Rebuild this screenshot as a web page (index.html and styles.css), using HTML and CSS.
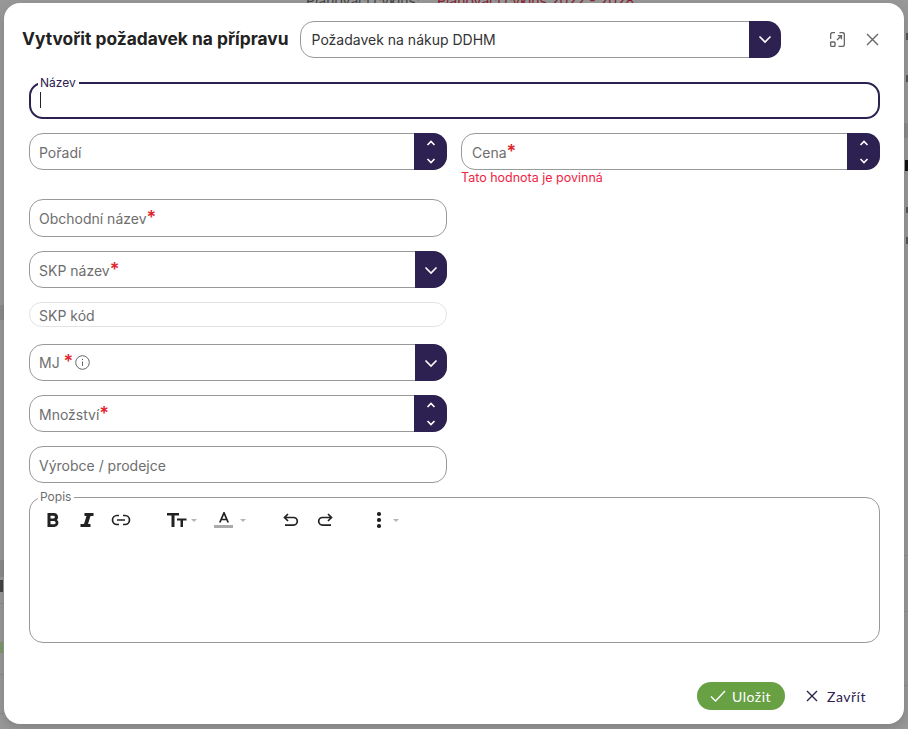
FILE: index.html
```html
<!DOCTYPE html>
<html lang="cs">
<head>
  <meta charset="UTF-8" />
  <meta name="viewport" content="width=device-width, initial-scale=1" />
  <title>Vytvořit požadavek na přípravu</title>
  <link rel="stylesheet" href="styles.css">
</head>
<body>
  <!-- Page behind the modal -->
  <div class="backdrop-text">
    <span>Plánovací cyklus:</span>
    <span class="backdrop-red">Plánovací cyklus 2022 - 2028</span>
  </div>
  <div class="mark left band-a"></div>
  <div class="mark left band-b"></div>
  <div class="mark left text-a"></div>
  <div class="mark left line-a"></div>
  <div class="mark left green-a"></div>
  <div class="mark left line-b"></div>
  <div class="mark left line-c"></div>
  <div class="mark right text-b"></div>
  <div class="mark right text-c"></div>
  <div class="mark right band-c"></div>
  <div class="mark right text-d"></div>
  <div class="mark right text-e"></div>
  <div class="mark right text-f"></div>
  <div class="mark right line-d"></div>
  <div class="mark right line-e"></div>
  <div class="mark right line-f"></div>

  <div id="modal" role="dialog" aria-labelledby="modal-title">
    <header class="modal-header">
      <h2 id="modal-title">Vytvořit požadavek na přípravu</h2>
      <div class="field type-select">
        <span class="field-value">Požadavek na nákup DDHM</span>
        <button class="addon addon-select" aria-label="Vybrat">
          <svg width="14" height="14" viewBox="0 0 14 14"><path d="M1.500 4.500 7 10l5.500-5.500" /></svg>
        </button>
      </div>
      <div class="modal-actions">
        <button class="icon-btn" aria-label="Zvětšit">
          <svg width="15" height="15" viewBox="0 0 15 15">
            <path d="M5 .6H2.600a2 2 0 0 0-2 2V7M9.500.6h2.900a2 2 0 0 1 2 2v9.800a2 2 0 0 1-2 2H8.500" />
            <rect x=".6" y="10" width="4.400" height="4.400" rx="1" />
            <path d="M7 8 11 4M7.800 3.600h3.600v3.600" />
          </svg>
        </button>
        <button class="icon-btn" aria-label="Zavřít">
          <svg width="13" height="13" viewBox="0 0 13 13"><path d="M1 1l11 11M12 1 1 12" /></svg>
        </button>
      </div>
    </header>

    <form class="modal-form">
      <fieldset class="field-focused">
        <legend>Název</legend>
        <span class="caret"></span>
      </fieldset>

      <div class="form-row first-row">
        <div class="field">
          <span class="field-label">Pořadí</span>
          <div class="addon addon-number">
            <svg width="10" height="7" viewBox="0 0 10 7"><path d="M1.500 5 5 1.500 8.500 5" /></svg>
            <svg width="10" height="7" viewBox="0 0 10 7"><path d="M1.500 2 5 5.500 8.500 2" /></svg>
          </div>
        </div>
        <div>
          <div class="field price-field">
            <span class="field-label">Cena<b class="req">*</b></span>
            <div class="addon addon-number">
              <svg width="10" height="7" viewBox="0 0 10 7"><path d="M1.500 5 5 1.500 8.500 5" /></svg>
              <svg width="10" height="7" viewBox="0 0 10 7"><path d="M1.500 2 5 5.500 8.500 2" /></svg>
            </div>
          </div>
          <p class="error">Tato hodnota je povinná</p>
        </div>
      </div>

      <div class="left-col">
        <div class="field tall">
          <span class="field-label">Obchodní název<b class="req">*</b></span>
        </div>
        <div class="field">
          <span class="field-label">SKP název<b class="req">*</b></span>
          <div class="addon addon-select">
            <svg width="14" height="14" viewBox="0 0 14 14"><path d="M1.500 4.500 7 10l5.500-5.500" /></svg>
          </div>
        </div>
        <div class="field small">
          <span class="field-label">SKP kód</span>
        </div>
        <div class="field mj-field">
          <span class="field-label">MJ <b class="req">*</b></span>
          <svg class="info-icon" width="15" height="15" viewBox="0 0 15 15">
            <circle cx="7.500" cy="7.500" r="6.800" />
            <path d="M7.500 6.500v4.500M7.500 3.800v1.200" />
          </svg>
          <div class="addon addon-select">
            <svg width="14" height="14" viewBox="0 0 14 14"><path d="M1.500 4.500 7 10l5.500-5.500" /></svg>
          </div>
        </div>
        <div class="field">
          <span class="field-label">Množství<b class="req">*</b></span>
          <div class="addon addon-number">
            <svg width="10" height="7" viewBox="0 0 10 7"><path d="M1.500 5 5 1.500 8.500 5" /></svg>
            <svg width="10" height="7" viewBox="0 0 10 7"><path d="M1.500 2 5 5.500 8.500 2" /></svg>
          </div>
        </div>
        <div class="field">
          <span class="field-label">Výrobce / prodejce</span>
        </div>
      </div>

      <fieldset class="editor">
        <legend>Popis</legend>
        <div class="toolbar">
          <div class="tool-group">
            <svg class="tool" width="16" height="16" viewBox="0 0 16 16"><path class="solid" fill-rule="evenodd" d="M2.500 1H9a4 4 0 0 1 3 6.700A4.200 4.200 0 0 1 9.500 15h-7zM5.500 3.700v2.800H8.500a1.400 1.400 0 0 0 0-2.800zM5.500 9v3.300h3.500a1.650 1.650 0 0 0 0-3.300z" /></svg>
            <svg class="tool" width="16" height="16" viewBox="0 0 16 16"><path class="solid" d="M5.500 1H14.500V4H11.500L9 12H11.500V15H1.500V12H5L7.500 4H5.500z" /></svg>
            <svg class="tool" width="20" height="12" viewBox="0 0 20 12"><path class="line" d="M8 1.500H6a4.500 4.500 0 0 0 0 9h2M12 1.500h2a4.500 4.500 0 0 1 0 9h-2M6 6h8" /></svg>
          </div>
          <div class="tool-group">
            <svg class="tool" width="20" height="14" viewBox="0 0 20 14"><path class="solid" d="M0 0H12V2.500H7.500V14H4.500V2.500H0zM10 5.500H19.500V7.500H16V14H13.500V7.500H10z" /></svg>
            <span class="tool-arrow"></span>
          </div>
          <div class="tool-group">
            <div class="tool-color">
              <svg width="14" height="11" viewBox="0 0 14 11"><path class="line" d="M2.800 10.500 7 .8l4.200 9.700M4.200 7.500h5.600" /></svg>
              <span class="color-bar"></span>
            </div>
            <span class="tool-arrow"></span>
          </div>
          <div class="tool-group">
            <svg class="tool" width="16" height="14" viewBox="0 0 16 14"><path class="line" d="M5 1 1.500 4.500 5 8M1.500 4.500H10.500a3.800 3.800 0 0 1 0 7.600H2" /></svg>
            <svg class="tool" width="16" height="14" viewBox="0 0 16 14"><path class="line" d="M11 1l3.500 3.500L11 8M14.500 4.500H5.500a3.800 3.800 0 0 0 0 7.600H14" /></svg>
          </div>
          <div class="tool-group">
            <span class="dots"><i></i><i></i><i></i></span>
            <span class="tool-arrow"></span>
          </div>
        </div>
      </fieldset>
    </form>

    <footer class="modal-footer">
      <button class="btn-save">
        <svg width="16" height="12" viewBox="0 0 16 12"><path d="M1 6.500 5.500 11 15 1" /></svg>
        Uložit
      </button>
      <button class="btn-close">
        <svg width="12" height="12" viewBox="0 0 12 12"><path d="M1 1l10 10M11 1 1 11" /></svg>
        Zavřít
      </button>
    </footer>
  </div>
</body>
</html>
```

FILE: styles.css
```css
/* Reset and base */
* {
  box-sizing: border-box;
}
body {
  margin: 0;
  height: 729px;
  overflow: hidden;
  background: #989898;
  font-family: Inter, 'Liberation Sans', sans-serif;
  color: #6e6e6e;
  padding: 3px 4px 5px;
}

svg {
  fill: none;
  stroke: currentColor;
  stroke-width: 1.4;
  display: block;
}

/* Page peeking out around the modal */
.backdrop-text {
  position: absolute;
  top: -8px;
  left: 306px;
  display: flex;
  gap: 17px;
  font-size: 14px;
  color: #444;
}
.backdrop-red {
  color: #8d2030;
}
.mark {
  position: absolute;
  width: 4px;
  height: 1px;
  background: #8b8b8b;
}
.mark.left { left: 0; }
.mark.right { right: 0; }
.band-a { top: 305px; height: 15px; }
.band-b { top: 560px; height: 17px; }
.band-c { top: 123px; height: 15px; }
.text-a { top: 580px; height: 12px; width: 3px; background: #444; }
.text-b { top: 33px; height: 7px; width: 2px; background: #555; }
.text-c { top: 75px; height: 7px; width: 2px; background: #555; }
.text-d { top: 160px; height: 11px; width: 3px; background: #111; }
.text-e { top: 207px; height: 6px; width: 2px; background: #555; }
.text-f { top: 237px; height: 7px; width: 2px; background: #555; }
.line-a { top: 603px; }
.green-a { top: 642px; height: 11px; width: 3px; background: #7c9a68; }
.line-b { top: 674px; }
.line-c { top: 713px; }
.line-d { top: 555px; }
.line-e { top: 611px; }
.line-f { top: 685px; }

/* Modal */
#modal {
  position: relative;
  height: 721px;
  background: #fff;
  border-radius: 16px;
  box-shadow: 0 4px 12px rgba(0,0,0,0.15);
  display: flex;
  flex-direction: column;
}

.modal-header {
  display: flex;
  align-items: center;
  padding: 17px 25px 0 18px;
}
.modal-header h2 {
  margin: 0 11px 0 0;
  font-size: 17.350px;
  font-weight: 700;
  line-height: 38px;
  color: #222;
  white-space: nowrap;
}
.type-select {
  width: 481px;
  height: 38px;
}
.field-value {
  padding-left: 11px;
  font-size: 14px;
  color: #333;
}
.modal-actions {
  margin-left: auto;
  display: flex;
  gap: 21px;
  align-items: center;
}
.icon-btn {
  border: none;
  background: transparent;
  padding: 0;
  color: #666;
  cursor: pointer;
}

/* Form */
.modal-form {
  padding: 0 24px 0 25px;
  margin-top: 19px;
  flex-grow: 1;
}
fieldset {
  margin: 0;
  min-width: 0;
}
legend {
  font-size: 12px;
  line-height: 14px;
  padding: 0 3px 0 2px;
}
.field-focused {
  height: 42px;
  padding: 0 0 0 9px;
  border: 2px solid #2c2150;
  border-radius: 14px;
  color: #2c2150;
}
.field-focused legend {
  margin-left: -2px;
  line-height: 12px;
  color: #2c2150;
}
.caret {
  display: block;
  width: 1px;
  height: 16px;
  margin-top: 3px;
  background: #222;
}

.form-row {
  display: grid;
  grid-template-columns: 418px 419px;
  column-gap: 14px;
  margin-top: 14px;
}
.form-row > .field {
  align-self: start;
}
.error {
  margin: 0;
  height: 15px;
  font-size: 12.500px;
  line-height: 16px;
  color: #f0243f;
}

.left-col {
  width: 418px;
  margin-top: 14px;
  display: flex;
  flex-direction: column;
  gap: 14px;
}

.field {
  position: relative;
  display: flex;
  align-items: center;
  height: 37px;
  border: 1px solid #999;
  border-radius: 14px;
  background: #fff;
}
.field.tall {
  height: 38px;
}
.field.small {
  height: 25px;
  border-color: #e3e3e3;
}
.field.mj-field {
  margin-top: 3px;
}
.field-label {
  padding: 2px 0 0 9px;
  font-size: 14px;
  color: #6e6e6e;
}
.tall .field-label,
.mj-field .field-label {
  padding-top: 0;
}
.price-field .field-label {
  padding-left: 10px;
}
.req {
  color: #e0262e;
  font-size: 18px;
  font-weight: 600;
  line-height: 14px;
}
.info-icon {
  margin: -1px 0 0 2px;
  color: #666;
  stroke-width: 1;
}

.addon {
  margin-left: auto;
  align-self: stretch;
  margin-top: -1px;
  margin-bottom: -1px;
  margin-right: -1px;
  background: #2c2150;
  border: none;
  border-radius: 0 14px 14px 0;
  color: #fff;
  display: flex;
  align-items: center;
  justify-content: center;
}
.addon svg {
  stroke-width: 1.6;
}
.addon-select {
  width: 32px;
  padding: 0;
}
.addon-number {
  width: 33px;
  flex-direction: column;
  justify-content: space-between;
  padding: 7px 0 6px;
}

/* Editor */
.editor {
  height: 153px;
  margin-top: 7px;
  padding: 0 0 0 15px;
  border: 1px solid #999;
  border-radius: 14px;
}
.editor legend {
  color: #6e6e6e;
  font-size: 12px;
  margin-left: -7px;
}
.toolbar {
  display: flex;
  align-items: center;
  height: 20px;
  margin-top: 6px;
  color: #222;
}
.toolbar svg.tool {
  flex-shrink: 0;
}
.solid {
  fill: #222;
  stroke: none;
}
.line {
  stroke: #222;
  stroke-width: 1.7;
}
.tool-group {
  display: flex;
  align-items: center;
  gap: 15px;
  margin-right: 22px;
}
.tool-group:first-child svg:nth-child(2) {
  margin-left: 3px;
}
.tool-group:first-child svg:nth-child(3) {
  margin-left: 1px;
}
.tool-group:nth-child(2) {
  margin-left: 14px;
  gap: 4px;
  margin-right: 17px;
}
.tool-group:nth-child(3) {
  gap: 7px;
  margin-right: 37px;
}
.tool-group:nth-child(4) {
  gap: 18px;
  margin-right: 44px;
}
.tool-group:nth-child(5) {
  gap: 12px;
}
.tool-color {
  display: flex;
  flex-direction: column;
  align-items: center;
  width: 19px;
  gap: 2px;
}
.color-bar {
  display: block;
  width: 19px;
  height: 3px;
  background: #aaa;
}
.tool-arrow {
  width: 0;
  height: 0;
  border-left: 3.500px solid transparent;
  border-right: 3.500px solid transparent;
  border-top: 3.500px solid #b5b5b5;
}
.dots {
  display: flex;
  flex-direction: column;
  gap: 2.500px;
}
.dots i {
  display: block;
  width: 3.500px;
  height: 3.500px;
  background: #222;
  border-radius: 50%;
}

/* Footer */
.modal-footer {
  display: flex;
  justify-content: flex-end;
  align-items: center;
  gap: 21px;
  padding: 0 38px 14px 0;
}
.modal-footer button {
  font-family: Lato, Inter, sans-serif;
  font-size: 14px;
  letter-spacing: 0.5px;
  border: none;
  display: flex;
  align-items: center;
  cursor: pointer;
}
.btn-save {
  width: 88px;
  height: 28px;
  padding: 0 0 0 13px;
  gap: 6px;
  border-radius: 14px;
  background: #68a044;
  color: #fff;
}
.btn-close {
  padding: 0;
  gap: 9px;
  background: transparent;
  color: #2c2150;
}
```
